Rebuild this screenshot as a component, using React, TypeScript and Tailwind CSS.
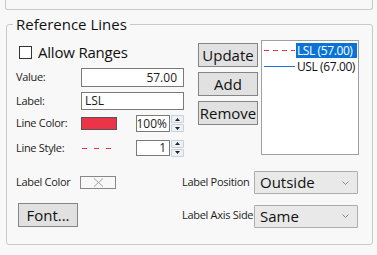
import React from 'react';

const font = "font-['Open_Sans','Noto_Sans',sans-serif]";

function Spin() {
  return (
    <div className="ml-[1px] flex w-[13px] flex-col gap-[1px]">
      <div className="flex h-[8px] items-center justify-center rounded-[1px] border border-[#c5d0dc] bg-[#eef2f6]">
        <svg width="5" height="3" viewBox="0 0 5 3"><path d="M0 3 L2.5 0 L5 3 Z" fill="#222" /></svg>
      </div>
      <div className="flex h-[8px] items-center justify-center rounded-[1px] border border-[#c5d0dc] bg-[#eef2f6]">
        <svg width="5" height="3" viewBox="0 0 5 3"><path d="M0 0 L2.5 3 L5 0 Z" fill="#222" /></svg>
      </div>
    </div>
  );
}

function Button({ label, className = '' }: { label: string; className?: string }) {
  return (
    <button className={`flex h-[24px] w-[60px] items-center justify-center border border-[#858585] bg-[#e1e1e1] text-[15px] leading-none text-[#111] ${className}`}>
      {label}
    </button>
  );
}

function Select({ value }: { value: string }) {
  return (
    <div className="ml-auto flex h-[23px] w-[104px] items-center justify-between rounded-[1px] border border-[#adadad] bg-[#e9e9e9] pl-[5px] pr-[8px]">
      <span className="text-[15px] leading-none text-[#111]">{value}</span>
      <svg width="7" height="4" viewBox="0 0 7 4"><path d="M0.5 0.5 L3.5 3.5 L6.5 0.5" stroke="#8a8a8a" strokeWidth="1" fill="none" /></svg>
    </div>
  );
}

export default function App() {
  return (
    <div className={`h-[255px] w-[377px] overflow-hidden bg-[#f8f8f8] text-[#1c1c1c] ${font}`}>
      {/* end of the panel above */}
      <div className="ml-[5px] h-[10px] w-[368px] rounded-b-[3px] border-x border-b border-[#c9c9c9]" />

      {/* Reference Lines group */}
      <div className="relative ml-[6px] mt-[14px] h-[221px] w-[367px] rounded-[3px] border border-[#c9c9c9]">
        <span className="absolute left-[6px] top-[-11px] bg-[#f8f8f8] px-[3px] text-[15px] leading-[20px] text-[#111]">
          Reference Lines
        </span>

        <div className="mt-[15px] flex">
          {/* left column */}
          <div className="ml-[9px] flex w-[168px] flex-col">
            <div className="mt-[5px] flex h-[15px] items-center">
              <div className="ml-[3px] h-[13px] w-[13px] border border-[#333] bg-white" />
              <span className="ml-[6px] text-[15px] leading-none tracking-[-0.2px] text-[#111]">Allow Ranges</span>
            </div>

            <div className="mt-[8px] flex h-[19px] items-center">
              <span className="w-[65px] text-[11px] tracking-[-0.3px]">Value:</span>
              <div className="flex h-full w-[103px] items-center justify-end border border-[#7a7a7a] bg-white pr-[6px] text-[12px]">57.00</div>
            </div>

            <div className="mt-[5px] flex h-[18px] items-center">
              <span className="w-[65px] text-[11px] tracking-[-0.3px]">Label:</span>
              <div className="flex h-full w-[103px] items-center border border-[#7a7a7a] bg-white pl-[3px] text-[12px]">LSL</div>
            </div>

            <div className="mt-[5px] flex h-[17px] items-center">
              <span className="w-[65px] text-[11px] tracking-[-0.3px]">Line Color:</span>
              <div className="h-[13px] w-[36px] border border-[#555] bg-[#ec3448]" />
              <div className="ml-[19px] flex h-full w-[34px] items-center justify-end border border-[#7a7a7a] bg-white pr-[2px] text-[12px]">100%</div>
              <Spin />
            </div>

            <div className="mt-[8px] flex h-[16px] items-center">
              <span className="w-[66px] text-[11px] tracking-[-0.3px]">Line Style:</span>
              <svg width="32" height="1" viewBox="0 0 32 1"><line x1="0" y1="0.5" x2="32" y2="0.5" stroke="#e8334a" strokeWidth="1" strokeDasharray="5 7" /></svg>
              <div className="ml-[22px] flex h-full w-[34px] items-center justify-end border border-[#7a7a7a] bg-white pr-[3px] text-[12px]">1</div>
              <Spin />
            </div>
          </div>

          {/* buttons */}
          <div className="ml-[14px] flex flex-col gap-[5px] pt-[3px]">
            <Button label="Update" />
            <Button label="Add" />
            <Button label="Remove" />
          </div>

          {/* list */}
          <div className="ml-[3px] h-[115px] w-[98px] border border-[#a0a0a0] bg-white pt-[2px] text-[12px] tracking-[-0.4px] whitespace-nowrap">
            <div className="flex h-[15px] items-center">
              <svg className="ml-[2px] shrink-0" width="31" height="1" viewBox="0 0 31 1"><line x1="0" y1="0.5" x2="31" y2="0.5" stroke="#e8334a" strokeWidth="1" strokeDasharray="5 4" /></svg>
              <span className="ml-[1px] flex h-full w-[61px] shrink-0 items-center bg-[#0a74d6] pl-[1px] leading-none text-white">LSL (57.00)</span>
            </div>
            <div className="mt-[1px] flex h-[15px] items-center">
              <div className="ml-[2px] h-[1px] w-[31px] shrink-0 bg-[#1f6fe0]" />
              <span className="ml-[2px] leading-none text-[#111]">USL (67.00)</span>
            </div>
          </div>
        </div>

        {/* bottom rows */}
        <div className="ml-[9px] mr-[14px] mt-[15px] flex h-[23px] items-center">
          <span className="w-[64px] text-[11px] tracking-[-0.3px]">Label Color</span>
          <div className="flex h-[13px] w-[36px] items-center justify-center border border-[#888] bg-[#f8f8f8]">
            <svg width="11" height="9" viewBox="0 0 11 9"><path d="M1 0.5 L10 8.5 M10 0.5 L1 8.5" stroke="#a0a0a0" strokeWidth="1" /></svg>
          </div>
          <span className="ml-[66px] text-[11px] tracking-[-0.3px]">Label Position</span>
          <Select value="Outside" />
        </div>

        <div className="ml-[9px] mr-[14px] mt-[9px] flex h-[24px] items-center">
          <Button label="Font..." className="ml-[2px]" />
          <span className="ml-[104px] text-[11px] tracking-[-0.3px]">Label Axis Side</span>
          <div className="ml-auto mt-[2px]">
            <Select value="Same" />
          </div>
        </div>
      </div>
    </div>
  );
}
